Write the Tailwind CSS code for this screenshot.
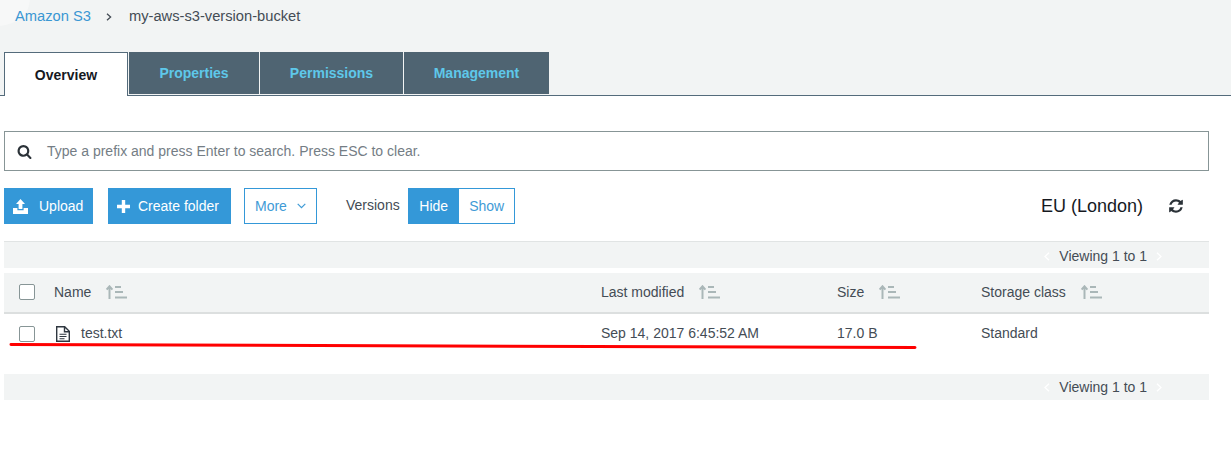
<!DOCTYPE html>
<html lang="en">
<head>
    <meta charset="UTF-8">
    <title>my-aws-s3-version-bucket - S3</title>
    <script src="https://cdn.jsdelivr.net/npm/@tailwindcss/browser@4"></script>
</head>
<body class="relative h-[460px] w-[1231px] overflow-hidden bg-white font-['Liberation_Sans',Arial,sans-serif] text-[14px] text-[#444c55]">
    <!-- breadcrumb + tabs -->
    <header class="relative h-[96px] border-b border-[#546b7b] bg-[#f2f4f4]">
        <svg class="absolute left-0 top-0 h-[50px] w-[40px]" viewBox="0 0 40 50" fill="#f7f8f8"><path d="M0 0h30q-2 22-30 26z"/></svg>
        <div class="relative flex h-[52px] items-start pl-[15px] pt-[8px] text-[14.7px] leading-[16px]">
            <a class="text-[#3a97d3]">Amazon S3</a>
            <svg class="ml-[15px] mt-[5px] h-[8px] w-[6px]" viewBox="0 0 6 8" fill="none" stroke="#444c55" stroke-width="1.3"><path d="M1 .8 4.6 4 1 7.2"/></svg>
            <span class="ml-[17px]">my-aws-s3-version-bucket</span>
        </div>
        <nav class="relative flex h-[44px] pl-[4px] font-bold">
            <a class="flex h-[44px] w-[124px] items-center justify-center border-x border-t border-[#546b7b] bg-white pt-px text-[#16191f]">Overview</a>
            <a class="ml-px flex h-[42px] w-[130px] items-center justify-center bg-[#4f6472] text-[#5ec8ea]">Properties</a>
            <a class="ml-px flex h-[42px] w-[143px] items-center justify-center bg-[#4f6472] text-[#5ec8ea]">Permissions</a>
            <a class="ml-px flex h-[42px] w-[145px] items-center justify-center bg-[#4f6472] text-[#5ec8ea]">Management</a>
        </nav>
    </header>

    <main class="px-[4px] pr-[22px]">
        <!-- search -->
        <div class="mt-[35px] flex h-[40px] items-center border border-[#879596] pl-[12px]">
            <svg class="h-[15px] w-[15px]" viewBox="0 0 1792 1792" fill="#2b3238"><path d="M1216 832q0-185-131.5-316.5t-316.5-131.5-316.5 131.5-131.5 316.5 131.5 316.5 316.5 131.5 316.5-131.5 131.5-316.5zm512 832q0 52-38 90t-90 38q-54 0-90-38l-343-342q-179 124-399 124-143 0-273.5-55.5t-225-150-150-225-55.5-273.5 55.5-273.5 150-225 225-150 273.5-55.5 273.5 55.5 225 150 150 225 55.5 273.5q0 220-124 399l343 343q37 37 37 90z"/></svg>
            <span class="ml-[15px] text-[#747d85]">Type a prefix and press Enter to search. Press ESC to clear.</span>
        </div>

        <!-- toolbar -->
        <div class="mt-[17px] flex h-[36px] items-center">
            <button class="flex h-[36px] w-[89px] items-center bg-[#3498d8] pl-[9px] text-white">
                <svg class="h-[15px] w-[15px]" viewBox="0 0 15 15" fill="white"><path d="M7.5 0 12 5H9.4v5H5.6V5H3zM0 9h4.4v2.2h6.200V9H15v6H0z"/></svg>
                <span class="ml-[11px]">Upload</span>
            </button>
            <button class="ml-[15px] flex h-[36px] w-[123px] items-center bg-[#3498d8] pl-[9px] text-white">
                <svg class="h-[13px] w-[13px]" viewBox="0 0 13 13" fill="white"><path d="M4.8 0h3.400v4.800H13v3.400H8.200V13H4.800V8.200H0V4.800h4.800z"/></svg>
                <span class="ml-[8px]">Create folder</span>
            </button>
            <button class="ml-[13px] flex h-[36px] w-[73px] items-center border border-[#3498d8] pl-[10px] text-[#3f9bd6]">
                More
                <svg class="ml-[10px] h-[6px] w-[9px]" viewBox="0 0 9 6" fill="none" stroke="#3f9bd6" stroke-width="1.2"><path d="M.7.8 4.500 4.700 8.300.8"/></svg>
            </button>
            <span class="ml-[29px] -translate-y-px">Versions</span>
            <div class="ml-[8px] flex h-[36px] w-[107px] border border-[#3498d8]">
                <span class="flex w-[50px] items-center justify-center bg-[#3498d8] text-white">Hide</span>
                <span class="flex flex-1 items-center justify-center pl-px text-[#3f9bd6]">Show</span>
            </div>
            <span class="ml-auto text-[18px] text-[#16191f]">EU (London)</span>
            <svg class="ml-[25px] mr-[25px] h-[16px] w-[16px]" viewBox="0 0 1792 1792" fill="#2b3238"><path d="M1639 1056q0 5-1 7-64 268-268 434.500t-478 166.500q-146 0-282.500-55t-243.500-157l-129 129q-19 19-45 19t-45-19-19-45v-448q0-26 19-45t45-19h448q26 0 45 19t19 45-19 45l-137 137q71 66 161 102t187 36q134 0 250-65t186-179q11-17 53-117 8-23 30-23h192q13 0 22.500 9.500t9.500 22.500zm25-800v448q0 26-19 45t-45 19h-448q-26 0-45-19t-19-45 19-45l138-138q-148-137-349-137-134 0-250 65t-186 179q-11 17-53 117-8 23-30 23h-199q-13 0-22.500-9.500t-9.500-22.500v-7q65-268 270-434.500t480-166.500q146 0 284 55.500t245 156.500l130-129q19-19 45-19t45 19 19 45z"/></svg>
        </div>

        <!-- pager top -->
        <div class="mt-[17px] flex h-[27px] items-center justify-end border-t border-[#e1e4e4] bg-[#f2f4f4] pr-[62px] pt-[2px]">
            <svg class="mr-[9px] h-[9px] w-[6px]" viewBox="0 0 6 9" fill="none" stroke="white" stroke-width="1.3"><path d="M5 .7 1 4.500 5 8.300"/></svg>
            <span>Viewing 1 to 1</span>
            <svg class="ml-[9px] mr-[-15px] h-[9px] w-[6px]" viewBox="0 0 6 9" fill="none" stroke="white" stroke-width="1.3"><path d="M1 .7 5 4.500 1 8.300"/></svg>
        </div>

        <!-- table head -->
        <div class="mt-[5px] grid h-[41px] grid-cols-[35px_547px_236px_144px_1fr] items-center border-b-2 border-[#dcdfdf] bg-[#f2f4f4] pb-px pl-[15px]">
            <span class="h-[16px] w-[16px] rounded-[2px] border border-[#879596] bg-white"></span>
            <div class="flex items-center">Name
                <svg class="ml-[15px] h-[14px] w-[21px]" viewBox="0 0 21 14" fill="none" stroke="#aab7b8" stroke-width="2"><path d="M3.500 14V1.500M.6 4.600 3.500 1.300l2.900 3.300M9 2h6M9 7h8M9 12.500h12"/></svg>
            </div>
            <div class="flex items-center">Last modified
                <svg class="ml-[15px] h-[14px] w-[21px]" viewBox="0 0 21 14" fill="none" stroke="#aab7b8" stroke-width="2"><path d="M3.500 14V1.500M.6 4.600 3.500 1.300l2.900 3.300M9 2h6M9 7h8M9 12.500h12"/></svg>
            </div>
            <div class="flex items-center">Size
                <svg class="ml-[15px] h-[14px] w-[21px]" viewBox="0 0 21 14" fill="none" stroke="#aab7b8" stroke-width="2"><path d="M3.500 14V1.500M.6 4.600 3.500 1.300l2.900 3.300M9 2h6M9 7h8M9 12.500h12"/></svg>
            </div>
            <div class="flex items-center">Storage class
                <svg class="ml-[15px] h-[14px] w-[21px]" viewBox="0 0 21 14" fill="none" stroke="#aab7b8" stroke-width="2"><path d="M3.500 14V1.500M.6 4.600 3.500 1.300l2.900 3.300M9 2h6M9 7h8M9 12.500h12"/></svg>
            </div>
        </div>

        <!-- table row -->
        <div class="grid h-[37px] grid-cols-[35px_547px_236px_144px_1fr] items-center pl-[15px] pt-[2px]">
            <span class="h-[16px] w-[16px] rounded-[2px] border border-[#879596] bg-white"></span>
            <div class="flex items-center">
                <svg class="ml-[2px] h-[16px] w-[14px]" viewBox="0 0 14 16" fill="none" stroke="#2f3740" stroke-width="1.4"><path d="M.7.7h8l4.600 4.600v10H.7zM8.500.7v5h4.800"/><path d="M3.500 8.200h7M3.500 10.500h7M3.500 12.800h5" stroke-width="1.1"/></svg>
                <span class="ml-[11px]">test.txt</span>
            </div>
            <span>Sep 14, 2017 6:45:52 AM</span>
            <span>17.0 B</span>
            <span>Standard</span>
        </div>

        <!-- pager bottom -->
        <div class="mt-[23px] flex h-[26px] items-center justify-end bg-[#f2f4f4] pr-[62px]">
            <svg class="mr-[9px] h-[9px] w-[6px]" viewBox="0 0 6 9" fill="none" stroke="white" stroke-width="1.3"><path d="M5 .7 1 4.500 5 8.300"/></svg>
            <span>Viewing 1 to 1</span>
            <svg class="ml-[9px] mr-[-15px] h-[9px] w-[6px]" viewBox="0 0 6 9" fill="none" stroke="white" stroke-width="1.3"><path d="M1 .7 5 4.500 1 8.300"/></svg>
        </div>
    </main>

    <!-- hand-drawn red underline lying over the row -->
    <svg class="absolute left-0 top-0 h-[460px] w-[1231px]" viewBox="0 0 1231 460" fill="none">
        <path d="M11 344.500 Q 460 345.500 915 347.500" stroke="#ff0000" stroke-width="3" stroke-linecap="round"/>
    </svg>
</body>
</html>
